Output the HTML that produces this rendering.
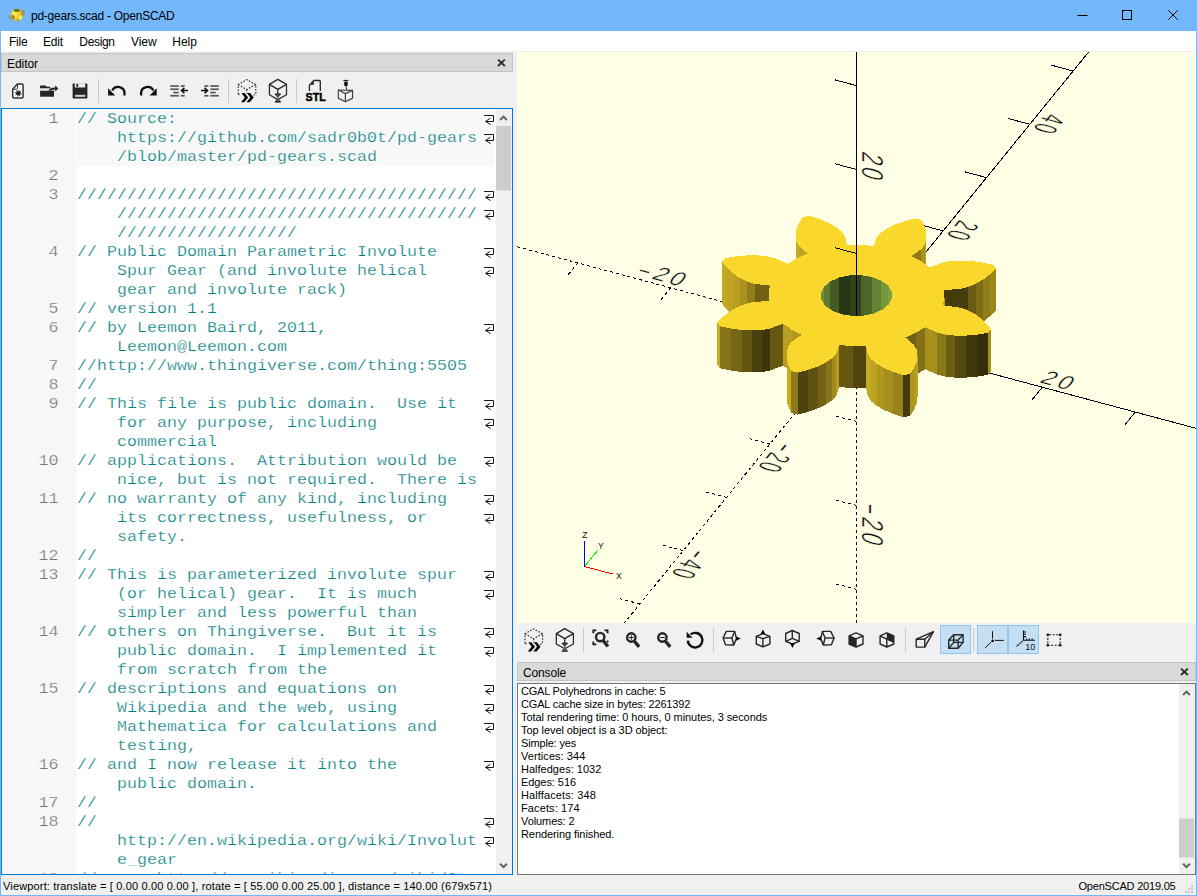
<!DOCTYPE html>
<html lang="en"><head><meta charset="utf-8"><title>pd-gears.scad - OpenSCAD</title>
<style>
html,body{margin:0;padding:0}
body{width:1197px;height:896px;overflow:hidden;background:#f0f0f0;font-family:"Liberation Sans",sans-serif;}
#win{position:absolute;left:0;top:0;width:1197px;height:896px;box-sizing:border-box;border:1px solid #74b8fc;border-top:none;background:#f0f0f0;overflow:hidden}
#win>div{position:absolute}
#titlebar{left:-1px;top:0;width:1197px;height:31px;background:#74b8fc}
#appicon{position:absolute;left:8px;top:7px;width:17px;height:17px}
#title{position:absolute;left:31px;top:9px;font-size:12px;line-height:15px;color:#000;white-space:nowrap;letter-spacing:-0.1px}
#wc{position:absolute;right:0;top:0;width:139px;height:31px}
#menubar{left:0;top:31px;width:1195px;height:20px;background:#fff}
#menubar span{position:absolute;top:4px;font-size:12px;line-height:15px;color:#000}
.docktitle{background:#d9d9d9;border:1px solid #c4c4c4;box-sizing:border-box;height:19px}
.docktitle .dt{position:absolute;left:5px;top:3px;font-size:11px;line-height:15px;color:#000}
.docktitle svg{position:absolute;right:6px;top:4px}
#edtitle{left:0;top:53px;width:512px}
#edtools{left:0;top:72px;width:512px;height:36px}
#edtools svg,#vptools svg{position:absolute}
#edframe{left:0;top:108px;width:512px;height:767px;box-sizing:border-box;border:1px solid #0078d7;background:#fff;overflow:hidden}
#margin{position:absolute;left:0;top:0;width:74px;height:100%;background:#f7f7f7}
#edtext{position:absolute;left:0;top:0;width:494px;font-family:"Liberation Mono",monospace;font-size:14px;line-height:19px;color:#007c7c;-webkit-text-stroke:0.25px #fff}
.r{position:relative;height:19px;white-space:pre;top:1px}
#hl{position:absolute;left:75px;top:0;width:417px;height:57px;background:#f8f8f8}
.ln{position:absolute;left:0;top:0;width:56.4px;text-align:right;color:#737373;-webkit-text-stroke:0.25px #f7f7f7;transform:scaleX(1.1905);transform-origin:100% 0}
.tx{position:absolute;left:75.3px;top:0;width:337px;height:19px;overflow:hidden;box-sizing:border-box;transform:scaleX(1.1905);transform-origin:0 0}
.tx.in{padding-left:33.6px}
.wm{position:absolute;left:481px;top:4px}
#edscroll{position:absolute;left:494px;top:0;width:16px;height:765px;background:#f0f0f0}
#viewport{left:516px;top:52px;width:679px;height:571px;background:#ffffe5;overflow:hidden}
#vptools{left:516px;top:623px;width:679px;height:36px}
#contitle{left:516px;top:662px;width:679px}
#console{left:516px;top:683px;width:679px;height:192px;box-sizing:border-box;border:1px solid #767676;background:#fff;overflow:hidden}
#context{position:absolute;left:3px;top:1px;font-size:11px;line-height:13px;color:#000;white-space:pre}
#conscroll{position:absolute;right:0;top:0;width:16px;height:190px;background:#f0f0f0}
#status{left:0;top:876px;width:1195px;height:19px;font-size:11px;line-height:13px;color:#000}
#st1{position:absolute;left:2px;top:4px;white-space:pre}
#st2{position:absolute;right:20.5px;top:4px;white-space:pre}
#status svg{position:absolute;left:1182px;top:7px}

</style></head>
<body>
<div id="win">
<div id="titlebar"><span id="appicon"><svg width="17" height="17" viewBox="8 7 17 17"><defs><radialGradient id="ag" cx="0.35" cy="0.35" r="0.75"><stop offset="0" stop-color="#fff35a"/><stop offset="0.55" stop-color="#f2c832"/><stop offset="1" stop-color="#9a7a10"/></radialGradient></defs>
<ellipse cx="10.6" cy="17.3" rx="1.8" ry="2.6" fill="#8f8f7a" opacity="0.75" transform="rotate(-25 10.6 17.3)"/><ellipse cx="23.3" cy="12.2" rx="1.7" ry="2.5" fill="#8f8f7a" opacity="0.75" transform="rotate(-25 23.3 12.2)"/>
<ellipse cx="17.1" cy="14.9" rx="6.3" ry="6" fill="url(#ag)" transform="rotate(-20 17.1 14.9)"/>
<ellipse cx="16.8" cy="10.4" rx="3" ry="1.6" fill="#6c7a14"/><ellipse cx="13.1" cy="17" rx="1.5" ry="2.4" fill="#a08a20" transform="rotate(-20 13.1 17)"/><ellipse cx="20.6" cy="17.6" rx="1.6" ry="2.5" fill="#eef060" transform="rotate(30 20.6 17.6)"/></svg></span><span id="title" style="letter-spacing:-0.246px;">pd-gears.scad - OpenSCAD</span>
<span id="wc"><svg width="139" height="31" viewBox="1058 0 139 31"><path d="M1077.5 15.5 H1087.5 M1168.2 10.2 L1177.8 19.8 M1177.8 10.2 L1168.2 19.8" stroke="#000" stroke-width="1" fill="none"/><rect x="1122.5" y="10.5" width="9" height="9" fill="none" stroke="#000" stroke-width="1"/></svg></span></div>
<div id="menubar"><span style="left:8px;letter-spacing:-0.261px;">File</span><span style="left:42px;letter-spacing:-0.172px;">Edit</span><span style="left:78.3px;letter-spacing:-0.327px;">Design</span><span style="left:130px;letter-spacing:-0.049px;">View</span><span style="left:171.3px;letter-spacing:-0.047px;">Help</span></div>
<div id="edtitle" class="docktitle"><span class="dt" style="letter-spacing:-0.060px;font-size:12px">Editor</span><svg width="9" height="9" viewBox="0 0 9 9"><path d="M1.0 1.6 L7.8 8.0 M7.8 1.6 L1.0 8.0" stroke="#2b2b2b" stroke-width="1.9" fill="none"/></svg></div>
<div id="edtools"><svg width="512" height="36" viewBox="1 72 512 36" style="left:0;top:0"><path d="M12.7 89.2 L17.4 84.1 H21.9 Q23.1 84.1 23.1 85.3 V96.8 Q23.1 98 21.9 98 H13.9 Q12.7 98 12.7 96.8 Z" fill="#fafafa" stroke="#333" stroke-width="1.5" stroke-linejoin="round"/><path d="M17.6 84.6 V88.3 Q17.6 89.2 16.7 89.2 H13" fill="none" stroke="#333" stroke-width="1"/><circle cx="18.3" cy="93.2" r="2.3" fill="#222"/><line x1="20.26" y1="93.60" x2="21.63" y2="93.88" stroke="#222" stroke-width="0.9"/><line x1="19.41" y1="94.87" x2="20.18" y2="96.03" stroke="#222" stroke-width="0.9"/><line x1="17.90" y1="95.16" x2="17.62" y2="96.53" stroke="#222" stroke-width="0.9"/><line x1="16.63" y1="94.31" x2="15.47" y2="95.08" stroke="#222" stroke-width="0.9"/><line x1="16.34" y1="92.80" x2="14.97" y2="92.52" stroke="#222" stroke-width="0.9"/><line x1="17.19" y1="91.53" x2="16.42" y2="90.37" stroke="#222" stroke-width="0.9"/><line x1="18.70" y1="91.24" x2="18.98" y2="89.87" stroke="#222" stroke-width="0.9"/><line x1="19.97" y1="92.09" x2="21.13" y2="91.32" stroke="#222" stroke-width="0.9"/><path d="M40.1 85.4 H45.8 L46.6 86.8 H50.4 V88.6 H40.1 Z" fill="#262626"/><rect x="40.1" y="90.5" width="13.9" height="6.2" fill="#262626"/><path d="M40.1 88.6 H49.5 L48.3 90.5 H40.1Z" fill="#e9e9e9"/><path d="M49.5 88.9 H53.9 V90.5 H48.5Z" fill="#9a9a9a"/><path d="M48.6 90.6 Q50.3 87.2 55.2 87.4 V85.2 L58.3 88.4 L55.2 91.4 V89.4 Q51.5 89.3 50.6 90.6 Z" fill="#262626"/><rect x="72.6" y="83.5" width="14.8" height="15" rx="0.8" fill="#262626"/><rect x="74.8" y="83.3" width="10.4" height="4.2" fill="#f0f0f0"/><rect x="76.4" y="83.9" width="1.8" height="3" fill="#262626"/><rect x="75" y="94.8" width="10.2" height="2.1" fill="#cfcfcf"/><rect x="98" y="79" width="1" height="24" fill="#c8c8c8"/><path d="M124.5 95.6 V93.6 A6.5 6.5 0 0 0 112.2 90.6" fill="none" stroke="#111" stroke-width="2.3"/><polygon points="108.1,88.3 108.1,95.6 115.2,95.6" fill="#111"/><path d="M141.1 95.6 V93.6 A6.5 6.5 0 0 1 153.4 90.6" fill="none" stroke="#111" stroke-width="2.3"/><polygon points="156.7,88.3 156.7,95.6 149.6,95.6" fill="#111"/><g fill="#5a5a5a"><rect x="170.2" y="85.2" width="8.5" height="1.7"/><rect x="180.6" y="85.2" width="4.1" height="1.7"/><rect x="170.2" y="94.9" width="8.5" height="1.7"/><rect x="180.6" y="94.9" width="4.1" height="1.7"/><rect x="170.2" y="88.4" width="8.5" height="1.7"/><rect x="173.2" y="91.7" width="5.5" height="1.7"/></g><path d="M187.9 90.5 H181.8 M184.4 87.9 L181.5 90.5 L184.4 93.1" fill="none" stroke="#111" stroke-width="1.6"/><g fill="#5a5a5a"><rect x="204.3" y="85.2" width="4.1" height="1.7"/><rect x="210.3" y="85.2" width="8.5" height="1.7"/><rect x="204.3" y="94.9" width="4.1" height="1.7"/><rect x="210.3" y="94.9" width="8.5" height="1.7"/><rect x="210.3" y="88.4" width="8.5" height="1.7"/><rect x="210.3" y="91.7" width="5.5" height="1.7"/></g><path d="M201 90.5 H207.2 M204.6 87.9 L207.5 90.5 L204.6 93.1" fill="none" stroke="#111" stroke-width="1.6"/><rect x="228" y="79" width="1" height="24" fill="#c8c8c8"/><g transform="translate(-286.8 -549.2)"><g fill="none" stroke="#262626" stroke-width="1.1" stroke-dasharray="1.6 1.5"><polyline points="525.00,643.30 525.00,633.80 533.60,628.80 542.60,633.80 542.60,643.30 539.50,645.00"/><polyline points="525.00,633.80 533.60,638.70"/><polyline points="542.60,633.80 533.60,638.70"/><polyline points="533.60,638.70 533.60,642.50"/><polyline points="525.00,643.30 527.50,644.70"/></g><polygon fill="#000" points="528.30,642.30 531.40,642.30 535.00,646.80 531.00,651.40 527.80,651.40 531.60,646.80"/><polygon fill="#000" points="533.80,642.30 536.90,642.30 540.50,646.80 536.50,651.40 533.30,651.40 537.10,646.80"/></g><g transform="translate(-286.9 -549.2)"><g fill="none" stroke="#262626" stroke-width="1.25" stroke-linejoin="round"><polygon points="564.70,628.60 573.40,633.60 573.40,644.00 564.70,648.80 556.30,644.00 556.30,633.60"/><polyline points="556.30,633.60 564.70,638.60 573.40,633.60"/><polyline points="564.70,638.60 564.70,643.00"/></g><rect x="561.8" y="642.6" width="5.9" height="1.5" fill="#262626"/><rect x="561.8" y="650.2" width="5.9" height="1.6" fill="#262626"/><polygon points="562.30,644.10 567.20,644.10 564.75,647.30" fill="#444"/><polygon points="562.10,650.30 567.40,650.30 564.75,646.60" fill="#5a5a5a"/></g><rect x="296" y="79" width="1" height="24" fill="#c8c8c8"/><path d="M309.4 90.9 V85.3 L313.9 80.5 H319.3 Q320.3 80.5 320.3 81.5 V90.9" fill="none" stroke="#222" stroke-width="1.3"/><polygon points="313.9,81.2 313.9,84.7 310.4,84.7" fill="#222"/><text x="315.7" y="100.6" text-anchor="middle" font-family="'Liberation Sans',sans-serif" font-weight="bold" font-size="10.2" fill="#000" stroke="#000" stroke-width="0.45" textLength="20.2" lengthAdjust="spacingAndGlyphs">STL</text><rect x="343.4" y="79.9" width="5" height="1.1" fill="#222"/><rect x="344.2" y="81.4" width="3.5" height="4.6" rx="1" fill="#111"/><path d="M346 85.8 L346.6 90" stroke="#333" stroke-width="1" fill="none"/><g fill="none" stroke="#444" stroke-width="1.2" stroke-linejoin="round"><polygon points="338.3,90 352.6,90.4 352.6,98.1 345.4,101.8 338.3,98.1"/><polyline points="338.3,90 345.4,93.6 352.6,90.4"/><polyline points="345.4,93.6 345.4,101.8"/></g></svg></div>
<div id="edframe"><div id="margin"></div><div id="hl"></div><div id="edtext">
<div class="r hl"><span class="ln">1</span><span class="tx">// Source:</span><svg class="wm" width="12" height="12" viewBox="483 114 12 12"><path d="M484 115.5H493.5V121.5H485.5M490.3 118.2L485.6 121.4L490.6 124.6" fill="none" stroke="#1a1a1a" stroke-width="1"/></svg></div>
<div class="r hl"><span class="ln"></span><span class="tx in">https://github.com/sadr0b0t/pd-gears</span><svg class="wm" width="12" height="12" viewBox="483 114 12 12"><path d="M484 115.5H493.5V121.5H485.5M490.3 118.2L485.6 121.4L490.6 124.6" fill="none" stroke="#1a1a1a" stroke-width="1"/></svg></div>
<div class="r hl"><span class="ln"></span><span class="tx in">/blob/master/pd-gears.scad</span></div>
<div class="r"><span class="ln">2</span><span class="tx"></span></div>
<div class="r"><span class="ln">3</span><span class="tx">////////////////////////////////////////</span><svg class="wm" width="12" height="12" viewBox="483 114 12 12"><path d="M484 115.5H493.5V121.5H485.5M490.3 118.2L485.6 121.4L490.6 124.6" fill="none" stroke="#1a1a1a" stroke-width="1"/></svg></div>
<div class="r"><span class="ln"></span><span class="tx in">////////////////////////////////////</span><svg class="wm" width="12" height="12" viewBox="483 114 12 12"><path d="M484 115.5H493.5V121.5H485.5M490.3 118.2L485.6 121.4L490.6 124.6" fill="none" stroke="#1a1a1a" stroke-width="1"/></svg></div>
<div class="r"><span class="ln"></span><span class="tx in">//////////////////</span></div>
<div class="r"><span class="ln">4</span><span class="tx">// Public Domain Parametric Involute</span><svg class="wm" width="12" height="12" viewBox="483 114 12 12"><path d="M484 115.5H493.5V121.5H485.5M490.3 118.2L485.6 121.4L490.6 124.6" fill="none" stroke="#1a1a1a" stroke-width="1"/></svg></div>
<div class="r"><span class="ln"></span><span class="tx in">Spur Gear (and involute helical</span><svg class="wm" width="12" height="12" viewBox="483 114 12 12"><path d="M484 115.5H493.5V121.5H485.5M490.3 118.2L485.6 121.4L490.6 124.6" fill="none" stroke="#1a1a1a" stroke-width="1"/></svg></div>
<div class="r"><span class="ln"></span><span class="tx in">gear and involute rack)</span></div>
<div class="r"><span class="ln">5</span><span class="tx">// version 1.1</span></div>
<div class="r"><span class="ln">6</span><span class="tx">// by Leemon Baird, 2011,</span><svg class="wm" width="12" height="12" viewBox="483 114 12 12"><path d="M484 115.5H493.5V121.5H485.5M490.3 118.2L485.6 121.4L490.6 124.6" fill="none" stroke="#1a1a1a" stroke-width="1"/></svg></div>
<div class="r"><span class="ln"></span><span class="tx in">Leemon@Leemon.com</span></div>
<div class="r"><span class="ln">7</span><span class="tx">//http://www.thingiverse.com/thing:5505</span></div>
<div class="r"><span class="ln">8</span><span class="tx">//</span></div>
<div class="r"><span class="ln">9</span><span class="tx">// This file is public domain.  Use it</span><svg class="wm" width="12" height="12" viewBox="483 114 12 12"><path d="M484 115.5H493.5V121.5H485.5M490.3 118.2L485.6 121.4L490.6 124.6" fill="none" stroke="#1a1a1a" stroke-width="1"/></svg></div>
<div class="r"><span class="ln"></span><span class="tx in">for any purpose, including</span><svg class="wm" width="12" height="12" viewBox="483 114 12 12"><path d="M484 115.5H493.5V121.5H485.5M490.3 118.2L485.6 121.4L490.6 124.6" fill="none" stroke="#1a1a1a" stroke-width="1"/></svg></div>
<div class="r"><span class="ln"></span><span class="tx in">commercial</span></div>
<div class="r"><span class="ln">10</span><span class="tx">// applications.  Attribution would be</span><svg class="wm" width="12" height="12" viewBox="483 114 12 12"><path d="M484 115.5H493.5V121.5H485.5M490.3 118.2L485.6 121.4L490.6 124.6" fill="none" stroke="#1a1a1a" stroke-width="1"/></svg></div>
<div class="r"><span class="ln"></span><span class="tx in">nice, but is not required.  There is</span></div>
<div class="r"><span class="ln">11</span><span class="tx">// no warranty of any kind, including</span><svg class="wm" width="12" height="12" viewBox="483 114 12 12"><path d="M484 115.5H493.5V121.5H485.5M490.3 118.2L485.6 121.4L490.6 124.6" fill="none" stroke="#1a1a1a" stroke-width="1"/></svg></div>
<div class="r"><span class="ln"></span><span class="tx in">its correctness, usefulness, or</span><svg class="wm" width="12" height="12" viewBox="483 114 12 12"><path d="M484 115.5H493.5V121.5H485.5M490.3 118.2L485.6 121.4L490.6 124.6" fill="none" stroke="#1a1a1a" stroke-width="1"/></svg></div>
<div class="r"><span class="ln"></span><span class="tx in">safety.</span></div>
<div class="r"><span class="ln">12</span><span class="tx">//</span></div>
<div class="r"><span class="ln">13</span><span class="tx">// This is parameterized involute spur</span><svg class="wm" width="12" height="12" viewBox="483 114 12 12"><path d="M484 115.5H493.5V121.5H485.5M490.3 118.2L485.6 121.4L490.6 124.6" fill="none" stroke="#1a1a1a" stroke-width="1"/></svg></div>
<div class="r"><span class="ln"></span><span class="tx in">(or helical) gear.  It is much</span><svg class="wm" width="12" height="12" viewBox="483 114 12 12"><path d="M484 115.5H493.5V121.5H485.5M490.3 118.2L485.6 121.4L490.6 124.6" fill="none" stroke="#1a1a1a" stroke-width="1"/></svg></div>
<div class="r"><span class="ln"></span><span class="tx in">simpler and less powerful than</span></div>
<div class="r"><span class="ln">14</span><span class="tx">// others on Thingiverse.  But it is</span><svg class="wm" width="12" height="12" viewBox="483 114 12 12"><path d="M484 115.5H493.5V121.5H485.5M490.3 118.2L485.6 121.4L490.6 124.6" fill="none" stroke="#1a1a1a" stroke-width="1"/></svg></div>
<div class="r"><span class="ln"></span><span class="tx in">public domain.  I implemented it</span><svg class="wm" width="12" height="12" viewBox="483 114 12 12"><path d="M484 115.5H493.5V121.5H485.5M490.3 118.2L485.6 121.4L490.6 124.6" fill="none" stroke="#1a1a1a" stroke-width="1"/></svg></div>
<div class="r"><span class="ln"></span><span class="tx in">from scratch from the</span></div>
<div class="r"><span class="ln">15</span><span class="tx">// descriptions and equations on</span><svg class="wm" width="12" height="12" viewBox="483 114 12 12"><path d="M484 115.5H493.5V121.5H485.5M490.3 118.2L485.6 121.4L490.6 124.6" fill="none" stroke="#1a1a1a" stroke-width="1"/></svg></div>
<div class="r"><span class="ln"></span><span class="tx in">Wikipedia and the web, using</span><svg class="wm" width="12" height="12" viewBox="483 114 12 12"><path d="M484 115.5H493.5V121.5H485.5M490.3 118.2L485.6 121.4L490.6 124.6" fill="none" stroke="#1a1a1a" stroke-width="1"/></svg></div>
<div class="r"><span class="ln"></span><span class="tx in">Mathematica for calculations and</span><svg class="wm" width="12" height="12" viewBox="483 114 12 12"><path d="M484 115.5H493.5V121.5H485.5M490.3 118.2L485.6 121.4L490.6 124.6" fill="none" stroke="#1a1a1a" stroke-width="1"/></svg></div>
<div class="r"><span class="ln"></span><span class="tx in">testing,</span></div>
<div class="r"><span class="ln">16</span><span class="tx">// and I now release it into the</span><svg class="wm" width="12" height="12" viewBox="483 114 12 12"><path d="M484 115.5H493.5V121.5H485.5M490.3 118.2L485.6 121.4L490.6 124.6" fill="none" stroke="#1a1a1a" stroke-width="1"/></svg></div>
<div class="r"><span class="ln"></span><span class="tx in">public domain.</span></div>
<div class="r"><span class="ln">17</span><span class="tx">//</span></div>
<div class="r"><span class="ln">18</span><span class="tx">//</span><svg class="wm" width="12" height="12" viewBox="483 114 12 12"><path d="M484 115.5H493.5V121.5H485.5M490.3 118.2L485.6 121.4L490.6 124.6" fill="none" stroke="#1a1a1a" stroke-width="1"/></svg></div>
<div class="r"><span class="ln"></span><span class="tx in">http://en.wikipedia.org/wiki/Involut</span><svg class="wm" width="12" height="12" viewBox="483 114 12 12"><path d="M484 115.5H493.5V121.5H485.5M490.3 118.2L485.6 121.4L490.6 124.6" fill="none" stroke="#1a1a1a" stroke-width="1"/></svg></div>
<div class="r"><span class="ln"></span><span class="tx in">e_gear</span></div>
<div class="r"><span class="ln">19</span><span class="tx">//      http://en.wikipedia.org/wiki/Gear</span></div>
</div>
<div id="edscroll"><svg width="16" height="765" viewBox="0 0 16 765" style="position:absolute;left:0;top:0"><rect x="0" y="17" width="15" height="64.5" fill="#cdcdcd"/><path d="M4.1 11.0 L7.5 7.6 L10.9 11.0" fill="none" stroke="#606060" stroke-width="2"/><path d="M4.1 754.8 L7.5 758.2 L10.9 754.8" fill="none" stroke="#606060" stroke-width="2"/></svg></div>
</div>
<div id="viewport"><svg width="679" height="571" viewBox="0 0 679 571" style="display:block;background:#ffffe5">
<g stroke="#000" stroke-width="1" shape-rendering="crispEdges" fill="none">
<line x1="339.5" y1="285.5" x2="2197.8" y2="782.5"/>
<line x1="339.5" y1="285.5" x2="-1518.8" y2="-211.5" stroke-dasharray="3 3"/>
<line x1="339.5" y1="285.5" x2="1206.1" y2="-780.4"/>
<line x1="339.5" y1="285.5" x2="-527.1" y2="1351.4" stroke-dasharray="3 3"/>
<line x1="339.5" y1="285.5" x2="339.5" y2="1965.1" stroke-dasharray="3 3"/>
<line x1="432.4" y1="310.4" x2="422.3" y2="322.8"/>
<line x1="246.6" y1="260.6" x2="236.5" y2="273.1" stroke-dasharray="3 3"/>
<line x1="382.8" y1="232.2" x2="361.1" y2="226.4"/>
<line x1="296.2" y1="338.8" x2="274.5" y2="333.0" stroke-dasharray="3 3"/>
<line x1="339.5" y1="369.5" x2="317.8" y2="363.7" stroke-dasharray="3 3"/>
<line x1="525.3" y1="335.2" x2="515.2" y2="347.6"/>
<line x1="153.7" y1="235.8" x2="143.6" y2="248.2" stroke-dasharray="3 3"/>
<line x1="426.2" y1="178.9" x2="404.5" y2="173.1"/>
<line x1="252.8" y1="392.1" x2="231.2" y2="386.3" stroke-dasharray="3 3"/>
<line x1="339.5" y1="453.5" x2="317.8" y2="447.7" stroke-dasharray="3 3"/>
<line x1="618.2" y1="360.1" x2="608.1" y2="372.5"/>
<line x1="60.8" y1="210.9" x2="50.6" y2="223.4" stroke-dasharray="3 3"/>
<line x1="469.5" y1="125.6" x2="447.8" y2="119.8"/>
<line x1="209.5" y1="445.4" x2="187.8" y2="439.6" stroke-dasharray="3 3"/>
<line x1="339.5" y1="537.4" x2="317.8" y2="531.6" stroke-dasharray="3 3"/>
<line x1="711.2" y1="384.9" x2="701.1" y2="397.3"/>
<line x1="-32.2" y1="186.1" x2="-42.3" y2="198.5" stroke-dasharray="3 3"/>
<line x1="512.8" y1="72.3" x2="491.1" y2="66.5"/>
<line x1="166.2" y1="498.7" x2="144.5" y2="492.9" stroke-dasharray="3 3"/>
<line x1="339.5" y1="621.4" x2="317.8" y2="615.6" stroke-dasharray="3 3"/>
<line x1="804.1" y1="409.8" x2="794.0" y2="422.2"/>
<line x1="-125.1" y1="161.2" x2="-135.2" y2="173.7" stroke-dasharray="3 3"/>
<line x1="556.1" y1="19.0" x2="534.5" y2="13.2"/>
<line x1="122.9" y1="552.0" x2="101.2" y2="546.2" stroke-dasharray="3 3"/>
<line x1="339.5" y1="705.4" x2="317.8" y2="699.6" stroke-dasharray="3 3"/>
<line x1="897.0" y1="434.6" x2="886.9" y2="447.0"/>
<line x1="-218.0" y1="136.4" x2="-228.1" y2="148.8" stroke-dasharray="3 3"/>
<line x1="599.5" y1="-34.3" x2="577.8" y2="-40.1"/>
<line x1="79.5" y1="605.3" x2="57.9" y2="599.5" stroke-dasharray="3 3"/>
<line x1="339.5" y1="789.4" x2="317.8" y2="783.6" stroke-dasharray="3 3"/>
<line x1="989.9" y1="459.5" x2="979.8" y2="471.9"/>
<line x1="-310.9" y1="111.5" x2="-321.0" y2="124.0" stroke-dasharray="3 3"/>
<line x1="642.8" y1="-87.6" x2="621.1" y2="-93.4"/>
<line x1="36.2" y1="658.6" x2="14.5" y2="652.8" stroke-dasharray="3 3"/>
<line x1="339.5" y1="873.4" x2="317.8" y2="867.6" stroke-dasharray="3 3"/>
<line x1="1082.8" y1="484.3" x2="1072.7" y2="496.7"/>
<line x1="-403.8" y1="86.7" x2="-413.9" y2="99.1" stroke-dasharray="3 3"/>
<line x1="686.1" y1="-140.9" x2="664.4" y2="-146.7"/>
<line x1="-7.1" y1="711.9" x2="-28.8" y2="706.1" stroke-dasharray="3 3"/>
<line x1="339.5" y1="957.3" x2="317.8" y2="951.5" stroke-dasharray="3 3"/>
<line x1="1175.7" y1="509.2" x2="1165.6" y2="521.6"/>
<line x1="-496.7" y1="61.8" x2="-506.9" y2="74.3" stroke-dasharray="3 3"/>
<line x1="729.4" y1="-194.2" x2="707.8" y2="-200.0"/>
<line x1="-50.4" y1="765.2" x2="-72.1" y2="759.4" stroke-dasharray="3 3"/>
<line x1="339.5" y1="1041.3" x2="317.8" y2="1035.5" stroke-dasharray="3 3"/>
<line x1="1268.7" y1="534.0" x2="1258.6" y2="546.5"/>
<line x1="-589.7" y1="37.0" x2="-599.8" y2="49.4" stroke-dasharray="3 3"/>
<line x1="772.8" y1="-247.4" x2="751.1" y2="-253.2"/>
<line x1="-93.8" y1="818.4" x2="-115.5" y2="812.6" stroke-dasharray="3 3"/>
<line x1="339.5" y1="1125.3" x2="317.8" y2="1119.5" stroke-dasharray="3 3"/>
<line x1="1361.6" y1="558.9" x2="1351.5" y2="571.3"/>
<line x1="-682.6" y1="12.1" x2="-692.7" y2="24.6" stroke-dasharray="3 3"/>
<line x1="816.1" y1="-300.7" x2="794.4" y2="-306.5"/>
<line x1="-137.1" y1="871.7" x2="-158.8" y2="865.9" stroke-dasharray="3 3"/>
<line x1="339.5" y1="1209.3" x2="317.8" y2="1203.5" stroke-dasharray="3 3"/>
<line x1="1454.5" y1="583.7" x2="1444.4" y2="596.2"/>
<line x1="-775.5" y1="-12.7" x2="-785.6" y2="-0.3" stroke-dasharray="3 3"/>
<line x1="859.4" y1="-354.0" x2="837.8" y2="-359.8"/>
<line x1="-180.4" y1="925.0" x2="-202.1" y2="919.2" stroke-dasharray="3 3"/>
<line x1="339.5" y1="1293.3" x2="317.8" y2="1287.5" stroke-dasharray="3 3"/>
<line x1="1547.4" y1="608.6" x2="1537.3" y2="621.0"/>
<line x1="-868.4" y1="-37.6" x2="-878.5" y2="-25.1" stroke-dasharray="3 3"/>
<line x1="902.8" y1="-407.3" x2="881.1" y2="-413.1"/>
<line x1="-223.8" y1="978.3" x2="-245.4" y2="972.5" stroke-dasharray="3 3"/>
<line x1="339.5" y1="1377.3" x2="317.8" y2="1371.5" stroke-dasharray="3 3"/>
</g>
<g shape-rendering="crispEdges">
<polygon points="278.5,183.6 279.2,189.1 279.2,231.1 278.5,225.6" fill="#c4a923"/>
<polygon points="407.8,192.4 409.4,186.9 409.4,228.9 407.8,234.3" fill="#baa121"/>
<polygon points="279.2,189.1 281.9,194.0 281.9,236.0 279.2,231.1" fill="#c5ab23"/>
<polygon points="404.4,197.1 407.8,192.4 407.8,234.3 404.4,239.1" fill="#a9921e"/>
<polygon points="281.9,194.0 290.6,201.5 290.6,243.5 281.9,236.0" fill="#bda321"/>
<polygon points="394.6,204.1 404.4,197.1 404.4,239.1 394.6,246.1" fill="#8c7919"/>
<polygon points="205.0,209.7 209.9,215.9 209.9,257.9 205.0,251.7" fill="#c3a922"/>
<polygon points="209.9,215.9 215.8,221.3 215.8,263.3 209.9,257.9" fill="#bea422"/>
<polygon points="472.8,222.5 478.6,216.6 478.6,258.6 472.8,264.5" fill="#9d881c"/>
<polygon points="215.8,221.3 222.5,225.9 222.5,267.9 215.8,263.3" fill="#b79e20"/>
<polygon points="466.1,227.6 472.8,222.5 472.8,264.5 466.1,269.6" fill="#907c19"/>
<polygon points="222.5,225.9 229.8,229.5 229.8,271.5 222.5,267.9" fill="#aa931e"/>
<polygon points="458.7,231.8 466.1,227.6 466.1,269.6 458.7,273.8" fill="#7f6d16"/>
<polygon points="229.8,229.5 237.8,231.9 237.8,273.9 229.8,271.5" fill="#937f1a"/>
<polygon points="237.8,231.9 253.1,233.6 253.1,275.6 237.8,273.9" fill="#716114"/>
<polygon points="450.9,235.1 458.7,231.8 458.7,273.8 450.9,277.0" fill="#695b13"/>
<polygon points="442.6,237.0 450.9,235.1 450.9,277.0 442.6,279.0" fill="#473e0d"/>
<polygon points="427.1,238.0 442.6,237.0 442.6,279.0 427.1,280.0" fill="#453c0c"/>
<polygon points="251.5,241.3 251.9,249.0 251.9,291.0 251.5,283.3" fill="#c3a822"/>
<polygon points="425.9,253.4 427.5,245.7 427.5,287.7 425.9,295.4" fill="#bca321"/>
<polygon points="200.4,270.4 202.7,274.2 202.7,316.2 200.4,312.4" fill="#c5aa23"/>
<polygon points="253.2,276.5 266.2,271.6 266.2,313.6 253.2,318.5" fill="#645712"/>
<polygon points="266.2,271.6 274.5,277.7 274.5,319.6 266.2,313.6" fill="#b99f21"/>
<polygon points="202.7,274.2 213.8,276.5 213.8,318.5 202.7,316.2" fill="#857317"/>
<polygon points="213.8,276.5 224.7,278.0 224.7,320.0 213.8,318.5" fill="#756515"/>
<polygon points="244.7,278.1 253.2,276.5 253.2,318.5 244.7,320.1" fill="#3c340b"/>
<polygon points="408.3,275.1 420.4,280.7 420.4,322.7 408.3,317.1" fill="#a7901e"/>
<polygon points="399.0,280.8 408.3,275.1 408.3,317.1 399.0,322.8" fill="#837117"/>
<polygon points="224.7,278.0 235.0,278.5 235.0,320.5 224.7,320.0" fill="#625411"/>
<polygon points="235.0,278.5 244.7,278.1 244.7,320.1 235.0,320.5" fill="#4a400d"/>
<polygon points="471.1,280.9 474.0,277.3 474.0,319.3 471.1,322.9" fill="#a58f1d"/>
<polygon points="274.5,277.7 284.4,282.9 284.4,324.9 274.5,319.6" fill="#ae961f"/>
<polygon points="420.4,280.7 428.7,282.7 428.7,324.7 420.4,322.7" fill="#8a7718"/>
<polygon points="459.7,282.7 471.1,280.9 471.1,322.9 459.7,324.7" fill="#362e09"/>
<polygon points="448.6,283.6 459.7,282.7 459.7,324.7 448.6,325.6" fill="#41380b"/>
<polygon points="428.7,282.7 438.2,283.6 438.2,325.6 428.7,324.7" fill="#6c5d13"/>
<polygon points="388.4,285.5 399.0,280.8 399.0,322.8 388.4,327.5" fill="#6f6014"/>
<polygon points="438.2,283.6 448.6,283.6 448.6,325.6 438.2,325.6" fill="#55490f"/>
<polygon points="322.3,293.1 335.7,294.0 335.7,336.0 322.3,335.1" fill="#665812"/>
<polygon points="335.7,294.0 349.1,293.7 349.1,335.7 335.7,336.0" fill="#50450e"/>
<polygon points="319.2,301.9 322.3,293.1 322.3,335.1 319.2,343.8" fill="#b89f20"/>
<polygon points="349.1,293.7 350.9,302.6 350.9,344.6 349.1,335.7" fill="#c5aa23"/>
<polygon points="269.6,300.1 269.6,306.1 269.6,348.1 269.6,342.1" fill="#c2a722"/>
<polygon points="315.1,306.4 319.2,301.9 319.2,343.8 315.1,348.4" fill="#a28b1d"/>
<polygon points="350.9,302.6 354.2,307.4 354.2,349.4 350.9,344.6" fill="#c4a923"/>
<polygon points="399.6,309.4 400.5,303.4 400.5,345.4 399.6,351.4" fill="#bea422"/>
<polygon points="308.8,310.6 315.1,306.4 315.1,348.4 308.8,352.6" fill="#887518"/>
<polygon points="269.6,306.1 271.2,312.4 271.2,354.4 269.6,348.1" fill="#c5aa23"/>
<polygon points="354.2,307.4 359.9,311.9 359.9,353.9 354.2,349.4" fill="#bba221"/>
<polygon points="397.1,315.6 399.6,309.4 399.6,351.4 397.1,357.6" fill="#b69d20"/>
<polygon points="300.8,314.5 308.8,310.6 308.8,352.6 300.8,356.4" fill="#736314"/>
<polygon points="359.9,311.9 367.3,316.1 367.3,358.1 359.9,353.9" fill="#b0981f"/>
<polygon points="271.2,312.4 274.3,319.0 274.3,361.0 271.2,354.4" fill="#c6ab23"/>
<polygon points="291.4,317.8 300.8,314.5 300.8,356.4 291.4,359.8" fill="#605311"/>
<polygon points="367.3,316.1 376.2,320.0 376.2,361.9 367.3,358.1" fill="#a48e1d"/>
<polygon points="393.0,322.0 397.1,315.6 397.1,357.6 393.0,363.9" fill="#ac951e"/>
<polygon points="280.6,320.7 291.4,317.8 291.4,359.8 280.6,362.7" fill="#4e430e"/>
<polygon points="274.3,319.0 280.6,320.7 280.6,362.7 274.3,361.0" fill="#8f7b19"/>
<polygon points="376.2,320.0 386.4,323.3 386.4,365.3 376.2,361.9" fill="#98831b"/>
<polygon points="386.4,323.3 393.0,322.0 393.0,363.9 386.4,365.3" fill="#42390c"/>
<polygon points="343.9,223.1 332.7,223.3 332.7,265.3 343.9,265.1" fill="#32411a"/><polygon points="354.7,224.9 343.9,223.1 343.9,265.1 354.7,266.8" fill="#4e6528"/><polygon points="332.7,223.3 322.1,225.5 322.1,267.5 332.7,265.3" fill="#293615"/><polygon points="364.0,228.5 354.7,224.9 354.7,266.8 364.0,270.4" fill="#658234"/><polygon points="322.1,225.5 313.3,229.5 313.3,271.5 322.1,267.5" fill="#465a24"/><polygon points="370.9,233.5 364.0,228.5 364.0,270.4 370.9,275.5" fill="#75973c"/><polygon points="313.3,229.5 307.0,234.8 307.0,276.8 313.3,271.5" fill="#5e7a31"/><polygon points="374.7,239.6 370.9,233.5 370.9,275.5 374.7,281.6" fill="#7ca140"/><polygon points="307.0,234.8 303.9,241.0 303.9,283.0 307.0,276.8" fill="#70913a"/><polygon points="375.1,246.0 374.7,239.6 374.7,281.6 375.1,288.0" fill="#7b9f3f"/>
<path fill-rule="evenodd" fill="#f9d72c" d="M329.9,193.3 L328.1,184.4 L324.8,179.6 L319.1,175.1 L311.7,170.9 L302.8,167.1 L292.6,163.7 L286.0,165.1 L281.9,171.4 L279.4,177.7 L278.5,183.6 L279.2,189.1 L281.9,194.0 L290.6,201.5 L280.0,206.2 L270.7,211.9 L258.6,206.3 L250.3,204.3 L240.8,203.4 L230.4,203.4 L219.3,204.3 L207.9,206.1 L205.0,209.7 L209.9,215.9 L215.8,221.3 L222.5,225.9 L229.8,229.5 L237.8,231.9 L253.1,233.6 L251.5,241.3 L251.9,249.0 L236.4,250.0 L228.1,252.0 L220.3,255.2 L212.9,259.4 L206.2,264.5 L200.4,270.4 L202.7,274.2 L213.8,276.5 L224.7,278.0 L235.0,278.5 L244.7,278.1 L253.2,276.5 L266.2,271.6 L274.5,277.7 L284.4,282.9 L274.6,289.9 L271.2,294.7 L269.6,300.1 L269.6,306.1 L271.2,312.4 L274.3,319.0 L280.6,320.7 L291.4,317.8 L300.8,314.5 L308.8,310.6 L315.1,306.4 L319.2,301.9 L322.3,293.1 L335.7,294.0 L349.1,293.7 L350.9,302.6 L354.2,307.4 L359.9,311.9 L367.3,316.1 L376.2,320.0 L386.4,323.3 L393.0,322.0 L397.1,315.6 L399.6,309.4 L400.5,303.4 L399.8,297.9 L397.1,293.0 L388.4,285.5 L399.0,280.8 L408.3,275.1 L420.4,280.7 L428.7,282.7 L438.2,283.6 L448.6,283.6 L459.7,282.7 L471.1,280.9 L474.0,277.3 L469.1,271.1 L463.2,265.7 L456.5,261.1 L449.2,257.5 L441.2,255.2 L425.9,253.4 L427.5,245.7 L427.1,238.0 L442.6,237.0 L450.9,235.1 L458.7,231.8 L466.1,227.6 L472.8,222.5 L478.6,216.6 L476.3,212.8 L465.2,210.5 L454.3,209.0 L444.0,208.5 L434.3,208.9 L425.8,210.5 L412.8,215.5 L404.5,209.4 L394.6,204.1 L404.4,197.1 L407.8,192.4 L409.4,186.9 L409.4,180.9 L407.8,174.6 L404.7,168.0 L398.4,166.3 L387.6,169.2 L378.2,172.6 L370.2,176.4 L363.9,180.6 L359.8,185.2 L356.7,193.9 L343.3,193.0 Z M372.0,252.2 L375.1,246.0 L374.7,239.6 L370.9,233.5 L364.0,228.5 L354.7,224.9 L343.9,223.1 L332.7,223.3 L322.1,225.5 L313.3,229.5 L307.0,234.8 L303.9,241.0 L304.3,247.4 L308.1,253.5 L315.0,258.6 L324.3,262.2 L335.1,263.9 L346.3,263.7 L356.9,261.5 L365.7,257.5 Z"/>
</g>
<g stroke="#000" stroke-width="1" shape-rendering="crispEdges" fill="none">
<line x1="339.5" y1="264.1" x2="339.5" y2="-5.0"/>
<line x1="339.5" y1="201.5" x2="317.8" y2="195.7"/>
<line x1="339.5" y1="117.5" x2="317.8" y2="111.7"/>
<line x1="339.5" y1="33.6" x2="317.8" y2="27.8"/>
<line x1="339.5" y1="-50.4" x2="317.8" y2="-56.2"/>
<line x1="339.5" y1="-134.4" x2="317.8" y2="-140.2"/>
<line x1="339.5" y1="-218.4" x2="317.8" y2="-224.2"/>
<line x1="339.5" y1="-302.4" x2="317.8" y2="-308.2"/>
<line x1="339.5" y1="-386.3" x2="317.8" y2="-392.1"/>
<line x1="339.5" y1="-470.3" x2="317.8" y2="-476.1"/>
<line x1="339.5" y1="-554.3" x2="317.8" y2="-560.1"/>
<line x1="339.5" y1="-638.3" x2="317.8" y2="-644.1"/>
<line x1="339.5" y1="-722.3" x2="317.8" y2="-728.1"/>
<line x1="339.5" y1="-806.3" x2="317.8" y2="-812.1"/>
</g>
<g font-family="'Liberation Sans',sans-serif" fill="#000" stroke="#ffffe5" stroke-width="0.4">
<text transform="matrix(1.1532 0.3084 -0.7060 0.8684 522.44 330.64)" font-size="20" y="0"><tspan x="-0.9">2</tspan><tspan x="13.2">0</tspan></text>
<text transform="matrix(1.1532 0.3084 -0.7060 0.8684 118.25 222.54)" font-size="20" y="0"><tspan x="-1.2" textLength="11.7" lengthAdjust="spacingAndGlyphs">-</tspan><tspan x="13.2">2</tspan><tspan x="27.3">0</tspan></text>
<text transform="matrix(-0.5378 0.6615 -1.5140 -0.4049 441.69 167.93)" font-size="20" y="0"><tspan x="-0.9">2</tspan><tspan x="13.2">0</tspan></text>
<text transform="matrix(-0.5378 0.6615 -1.5140 -0.4049 260.79 390.43)" font-size="20" y="0"><tspan x="-1.2" textLength="11.7" lengthAdjust="spacingAndGlyphs">-</tspan><tspan x="13.2">2</tspan><tspan x="27.3">0</tspan></text>
<text transform="matrix(0.0000 1.0423 -1.5140 -0.4049 344.92 99.39)" font-size="20" y="0"><tspan x="-0.9">2</tspan><tspan x="13.2">0</tspan></text>
<text transform="matrix(0.0000 1.0423 -1.5140 -0.4049 344.92 450.01)" font-size="20" y="0"><tspan x="-1.2" textLength="11.7" lengthAdjust="spacingAndGlyphs">-</tspan><tspan x="13.2">2</tspan><tspan x="27.3">0</tspan></text>
<text transform="matrix(1.1532 0.3084 -0.7060 0.8684 708.27 380.35)" font-size="20" y="0"><tspan x="-0.9">4</tspan><tspan x="13.2">0</tspan></text>
<text transform="matrix(1.1532 0.3084 -0.7060 0.8684 -67.58 172.84)" font-size="20" y="0"><tspan x="-1.2" textLength="11.7" lengthAdjust="spacingAndGlyphs">-</tspan><tspan x="13.2">4</tspan><tspan x="27.3">0</tspan></text>
<text transform="matrix(-0.5378 0.6615 -1.5140 -0.4049 528.34 61.34)" font-size="20" y="0"><tspan x="-0.9">4</tspan><tspan x="13.2">0</tspan></text>
<text transform="matrix(-0.5378 0.6615 -1.5140 -0.4049 174.14 497.02)" font-size="20" y="0"><tspan x="-1.2" textLength="11.7" lengthAdjust="spacingAndGlyphs">-</tspan><tspan x="13.2">4</tspan><tspan x="27.3">0</tspan></text>
<text transform="matrix(0.0000 1.0423 -1.5140 -0.4049 344.92 -68.57)" font-size="20" y="0"><tspan x="-0.9">4</tspan><tspan x="13.2">0</tspan></text>
<text transform="matrix(0.0000 1.0423 -1.5140 -0.4049 344.92 617.97)" font-size="20" y="0"><tspan x="-1.2" textLength="11.7" lengthAdjust="spacingAndGlyphs">-</tspan><tspan x="13.2">4</tspan><tspan x="27.3">0</tspan></text>
</g>
<g stroke-width="1" shape-rendering="crispEdges">
<line x1="67.5" y1="514.5" x2="95.6" y2="522.0" stroke="#ff0000"/>
<line x1="67.5" y1="514.5" x2="80.6" y2="498.4" stroke="#00ff00"/>
<line x1="67.5" y1="514.5" x2="67.5" y2="489.1" stroke="#0000ff"/>
</g>
<g font-family="'Liberation Sans',sans-serif" font-size="8.6" fill="#111" text-anchor="middle">
<text x="101.8" y="526.7">X</text>
<text x="83.9" y="497.2">Y</text>
<text x="67.8" y="486.4">Z</text>
</g>
</svg></div>
<div id="vptools"><svg width="679" height="36" viewBox="517 623 679 36" style="left:0;top:0"><g transform="translate(0 0)"><g fill="none" stroke="#262626" stroke-width="1.1" stroke-dasharray="1.6 1.5"><polyline points="525.00,643.30 525.00,633.80 533.60,628.80 542.60,633.80 542.60,643.30 539.50,645.00"/><polyline points="525.00,633.80 533.60,638.70"/><polyline points="542.60,633.80 533.60,638.70"/><polyline points="533.60,638.70 533.60,642.50"/><polyline points="525.00,643.30 527.50,644.70"/></g><polygon fill="#000" points="528.30,642.30 531.40,642.30 535.00,646.80 531.00,651.40 527.80,651.40 531.60,646.80"/><polygon fill="#000" points="533.80,642.30 536.90,642.30 540.50,646.80 536.50,651.40 533.30,651.40 537.10,646.80"/></g><g transform="translate(0 0)"><g fill="none" stroke="#262626" stroke-width="1.25" stroke-linejoin="round"><polygon points="564.70,628.60 573.40,633.60 573.40,644.00 564.70,648.80 556.30,644.00 556.30,633.60"/><polyline points="556.30,633.60 564.70,638.60 573.40,633.60"/><polyline points="564.70,638.60 564.70,643.00"/></g><rect x="561.8" y="642.6" width="5.9" height="1.5" fill="#262626"/><rect x="561.8" y="650.2" width="5.9" height="1.6" fill="#262626"/><polygon points="562.30,644.10 567.20,644.10 564.75,647.30" fill="#444"/><polygon points="562.10,650.30 567.40,650.30 564.75,646.60" fill="#5a5a5a"/></g><rect x="583" y="628" width="1" height="24" fill="#c8c8c8"/><rect x="713" y="628" width="1" height="24" fill="#c8c8c8"/><rect x="905" y="628" width="1" height="24" fill="#c8c8c8"/><rect x="973.3" y="628" width="1" height="24" fill="#c8c8c8"/><circle cx="600.2" cy="637.1" r="4.2" fill="none" stroke="#262626" stroke-width="2.4"/><path d="M603.3 640.7 L607.9 646.6" stroke="#262626" stroke-width="3.3" fill="none"/><path d="M593.3 633.2 V630.3 H596.3 M604.5 630.3 H607.6 V633.2 M593.3 641.4 V644.4 H596.3 M607.6 640.5 V642.5" fill="none" stroke="#111" stroke-width="1.7"/><circle cx="631.3" cy="637.5" r="4.2" fill="none" stroke="#262626" stroke-width="2.4"/><path d="M634.4 641.2 L639.1 646.9" stroke="#262626" stroke-width="3.3" fill="none"/><path d="M628.9 637.5 H633.7" stroke="#222" stroke-width="1" fill="none"/><path d="M631.3 635.1 V639.9" stroke="#222" stroke-width="1" fill="none"/><circle cx="662.4" cy="637.5" r="4.2" fill="none" stroke="#262626" stroke-width="2.4"/><path d="M665.5 641.2 L670.2 646.9" stroke="#262626" stroke-width="3.3" fill="none"/><path d="M660 637.5 H664.8" stroke="#222" stroke-width="1" fill="none"/><path d="M687.8 640.6 A7.3 7.3 0 1 0 690.6 634.4" fill="none" stroke="#111" stroke-width="2.4"/><polygon points="686.6,631.8 686.6,637.7 692.5,637.7" fill="#111"/><g fill="none" stroke="#262626" stroke-width="1.4" stroke-linejoin="round"><polygon points="723.1,638 726.3,631.4 734.7,631.4 736.4,638.4 733.8,645 725.5,644.8"/><polyline points="723.1,638 731.9,638"/><polyline points="734.7,631.4 731.9,638 733.8,645"/></g><polygon points="736.2,636.4 740.8,638.6 736.2,640.8" fill="#000"/><g fill="none" stroke="#262626" stroke-width="1.4" stroke-linejoin="round"><polygon points="762.9,633.6 769.9,636.3 769.9,644 762.9,646.8 756.3,644 756.3,636.3"/><polyline points="756.3,636.3 762.9,638.6 769.9,636.3"/><polyline points="762.9,638.6 762.9,646.8"/></g><polygon points="760.6,634 762.9,629.5 765.2,634" fill="#000"/><g fill="none" stroke="#262626" stroke-width="1.4" stroke-linejoin="round"><polygon points="792.2,630.5 799.2,633.5 799.2,641.4 792.4,644 785.7,641.4 785.7,633.5"/><polyline points="785.7,641.4 792.4,638.4 799.2,641.4"/><polyline points="792.4,638.4 792.2,630.5"/></g><polygon points="790.2,643.6 792.4,648.1 794.6,643.6" fill="#000"/><g fill="none" stroke="#262626" stroke-width="1.4" stroke-linejoin="round"><polygon points="834.1,638 830.7,631.4 822.4,631.4 820.8,638.4 823.2,645 831.4,644.8"/><polyline points="834.1,638 825.1,638"/><polyline points="822.4,631.4 825.1,638 823.2,645"/></g><polygon points="821,636.4 816.3,638.6 821,640.8" fill="#000"/><polygon points="849.1,635.8 856,638.8 856,647 849.1,644" fill="#262626"/><g fill="none" stroke="#262626" stroke-width="1.4" stroke-linejoin="round"><polygon points="856,632.8 863,635.8 863,644 856,647 849.1,644 849.1,635.8"/><polyline points="849.1,635.8 856,638.8 863,635.8"/><polyline points="856,638.8 856,647"/></g><polygon points="886.8,632.8 893.8,635.8 893.8,642.2 886.8,639.2" fill="#262626"/><g fill="none" stroke="#262626" stroke-width="1.4" stroke-linejoin="round"><polygon points="886.8,632.8 893.8,635.8 893.8,644 886.8,647 880.1,644 880.1,635.8"/><polyline points="880.1,635.8 886.8,639.2 893.8,642.2"/><polyline points="886.8,639.2 886.8,647"/></g><g fill="none" stroke="#262626" stroke-width="1.4" stroke-linejoin="round"><rect x="916.2" y="639.2" width="8.6" height="7.9"/><polyline points="916.2,639.2 933.4,631.7 924.8,647.1"/><polyline points="924.8,639.2 933.4,631.7"/></g><rect x="940.5" y="625.5" width="30" height="28" fill="#c4def3" stroke="#92c7f3" stroke-width="1"/><rect x="977.5" y="625.5" width="30" height="28" fill="#c4def3" stroke="#92c7f3" stroke-width="1"/><rect x="1008.5" y="625.5" width="30" height="28" fill="#c4def3" stroke="#92c7f3" stroke-width="1"/><g fill="none" stroke="#262626" stroke-width="1.4" stroke-linejoin="round" stroke-width="1.4"><rect x="948.7" y="640.1" width="9.4" height="8.2"/><rect x="953.7" y="634.7" width="9.4" height="7.7"/><path d="M948.7 640.1 L953.7 634.7 M958.1 640.1 L963.1 634.7 M958.1 648.3 L963.1 642.4 M948.7 648.3 L953.7 642.4"/></g><path d="M992.5 638.6 V631.2 M995 640.4 H1003.8 M991.4 642 L985.2 647.8" fill="none" stroke="#111" stroke-width="1"/><circle cx="992.7" cy="640.8" r="1.35" fill="#111"/><path d="M1023.5 630.6 V640.2 H1034.9 M1023.5 632 H1026 M1023.5 634.3 H1026 M1023.5 636.6 H1026 M1026.7 640.2 V638.6 M1029.4 640.2 V638.6 M1032.1 640.2 V638.6" fill="none" stroke="#111" stroke-width="1.1"/><path d="M1023.2 640.6 L1016 646.9 M1021 641 L1022.3 642.6 M1019.2 642.6 L1020.5 644.2 M1017.4 644.2 L1018.7 645.8" fill="none" stroke="#444" stroke-width="1"/><text x="1025.2" y="649.6" font-family="'Liberation Sans',sans-serif" font-size="9" fill="#111" textLength="10" lengthAdjust="spacingAndGlyphs">10</text><rect x="1047.8" y="634.7" width="12.4" height="10.6" fill="none" stroke="#222" stroke-width="1.1" stroke-dasharray="2.2 1.4" stroke-dashoffset="-1.2"/><circle cx="1047.8" cy="634.7" r="1.3" fill="#111"/><circle cx="1047.8" cy="645.3" r="1.3" fill="#111"/><circle cx="1060.2" cy="634.7" r="1.3" fill="#111"/><circle cx="1060.2" cy="645.3" r="1.3" fill="#111"/></svg></div>
<div id="contitle" class="docktitle"><span class="dt" style="letter-spacing:-0.147px;font-size:12px">Console</span><svg width="9" height="9" viewBox="0 0 9 9"><path d="M1.0 1.6 L7.8 8.0 M7.8 1.6 L1.0 8.0" stroke="#2b2b2b" stroke-width="1.9" fill="none"/></svg></div>
<div id="console"><div id="context"><div style="letter-spacing:-0.197px;">CGAL Polyhedrons in cache: 5</div><div style="letter-spacing:-0.160px;">CGAL cache size in bytes: 2261392</div><div style="letter-spacing:-0.064px;">Total rendering time: 0 hours, 0 minutes, 3 seconds</div><div style="letter-spacing:-0.065px;">Top level object is a 3D object:</div><div style="letter-spacing:-0.169px;">Simple: yes</div><div style="letter-spacing:0.062px;">Vertices: 344</div><div style="letter-spacing:0.012px;">Halfedges: 1032</div><div style="letter-spacing:-0.066px;">Edges: 516</div><div style="letter-spacing:0.114px;">Halffacets: 348</div><div style="letter-spacing:0.111px;">Facets: 174</div><div style="letter-spacing:-0.082px;">Volumes: 2</div><div style="letter-spacing:-0.079px;">Rendering finished.</div></div><div id="conscroll"><svg width="16" height="190" viewBox="0 0 16 190" style="position:absolute;left:0;top:0"><rect x="0" y="134.5" width="15" height="39" fill="#cdcdcd"/><path d="M4.1 11.0 L7.5 7.6 L10.9 11.0" fill="none" stroke="#606060" stroke-width="2"/><path d="M4.1 179.8 L7.5 183.2 L10.9 179.8" fill="none" stroke="#606060" stroke-width="2"/></svg></div></div>
<div id="status"><span id="st1" style="letter-spacing:0.156px;">Viewport: translate = [ 0.00 0.00 0.00 ], rotate = [ 55.00 0.00 25.00 ], distance = 140.00 (679x571)</span><span id="st2" style="letter-spacing:-0.206px;">OpenSCAD 2019.05</span><svg width="12" height="12" viewBox="1183 883 12 12"><rect x="1191" y="885" width="2" height="2" fill="#c2c2c2" shape-rendering="crispEdges"/><rect x="1188" y="888" width="2" height="2" fill="#c2c2c2" shape-rendering="crispEdges"/><rect x="1191" y="888" width="2" height="2" fill="#c2c2c2" shape-rendering="crispEdges"/><rect x="1185" y="891" width="2" height="2" fill="#c2c2c2" shape-rendering="crispEdges"/><rect x="1188" y="891" width="2" height="2" fill="#c2c2c2" shape-rendering="crispEdges"/><rect x="1191" y="891" width="2" height="2" fill="#c2c2c2" shape-rendering="crispEdges"/></svg></div>
</div>
</body></html>
